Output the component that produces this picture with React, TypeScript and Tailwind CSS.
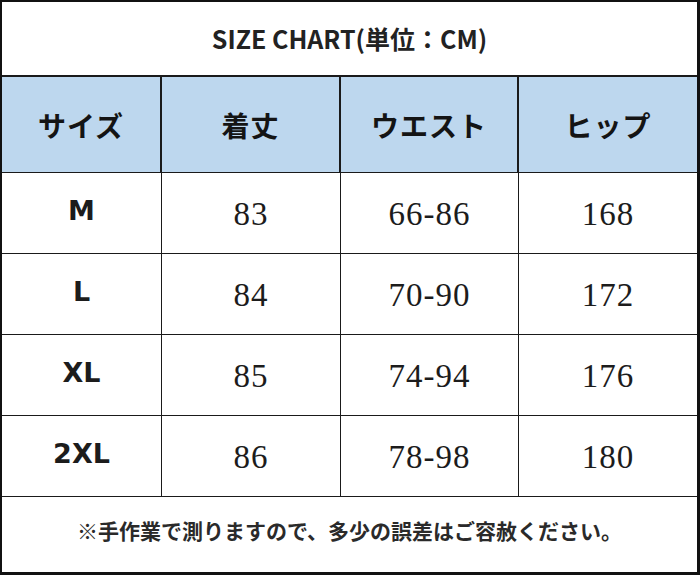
const rows = [
  { size: "M", length: "83", waist: "66-86", hip: "168" },
  { size: "L", length: "84", waist: "70-90", hip: "172" },
  { size: "XL", length: "85", waist: "74-94", hip: "176" },
  { size: "2XL", length: "86", waist: "78-98", hip: "180" },
];

const headers = ["サイズ", "着丈", "ウエスト", "ヒップ"];

const jp = "font-['Noto_Sans_CJK_JP','Noto_Sans',sans-serif]";
const cols = "grid grid-cols-[160px_179px_178px_178px]";

export default function App() {
  return (
    <div className="w-[700px] h-[575px] bg-white border-t-2 border-l-2 border-r-[3px] border-b-[3px] border-[#111] flex flex-col text-[#141414]">
      <div className={`h-[75px] shrink-0 flex items-center justify-center border-b-2 border-[#1a1a1a] ${jp} text-[25px] font-bold text-[#222]`}>
        SIZE CHART(単位：CM)
      </div>

      <div className={`${cols} h-[96px] shrink-0 bg-[#bdd7ee] border-b border-[#1a1a1a]`}>
        {headers.map((h, i) => (
          <div
            key={h}
            className={`flex items-center justify-center ${jp} text-[28px] font-bold tracking-[1px] ${i < 3 ? "border-r-2 border-[#1a1a1a]" : ""}`}
          >
            {h}
          </div>
        ))}
      </div>

      {rows.map((r) => (
        <div key={r.size} className={`${cols} h-[81px] shrink-0 border-b border-[#1a1a1a]`}>
          <div className="flex items-center justify-center pb-1 border-r border-[#1a1a1a] font-['DejaVu_Sans',sans-serif] text-[27px] font-bold text-[#1c1c1c]">
            {r.size}
          </div>
          {[r.length, r.waist, r.hip].map((v, i) => (
            <div
              key={i}
              className={`flex items-center justify-center pt-1 font-['Liberation_Serif',serif] text-[33px] tracking-[1px] text-[#1c1c1c] ${i < 2 ? "border-r border-[#1a1a1a]" : ""}`}
            >
              {v}
            </div>
          ))}
        </div>
      ))}

      <div className={`flex-1 flex items-center justify-center pb-2 ${jp} text-[21px] font-bold text-[#2a2a2a]`}>
        ※手作業で測りますので、多少の誤差はご容赦ください。
      </div>
    </div>
  );
}
